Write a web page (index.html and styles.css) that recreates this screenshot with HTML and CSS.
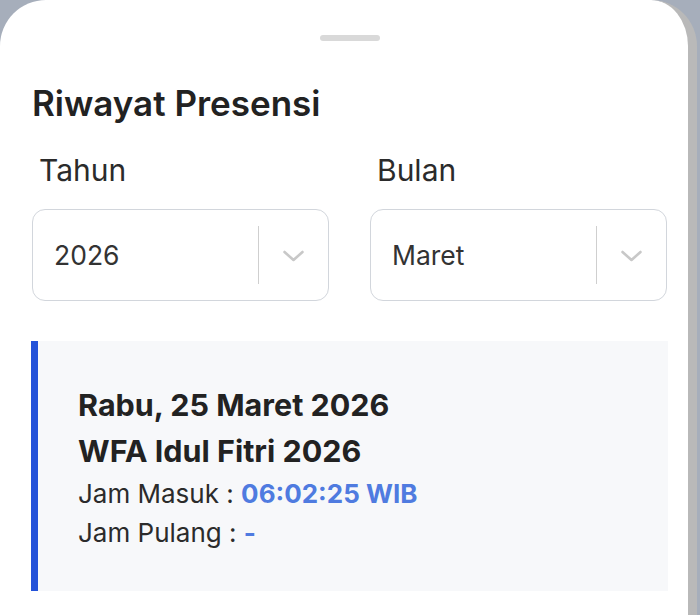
FILE: index.html
```html
<!DOCTYPE html>
<html lang="id">
<head>
<meta charset="utf-8">
<title>Riwayat Presensi</title>
<link rel="stylesheet" href="styles.css">
</head>
<body>
<div class="sheet">
  <div class="handle"></div>
  <h1 class="title">Riwayat Presensi</h1>
  <div class="filters">
    <div class="field">
      <div class="label">Tahun</div>
      <div class="select">
        <span class="value">2026</span>
        <span class="sep"></span>
        <svg class="chev" width="23" height="14" viewBox="0 0 23 14"><path d="M2.5 3L11.5 11L20.5 3" fill="none" stroke="#c8c8c8" stroke-width="2.6" stroke-linecap="round" stroke-linejoin="round"/></svg>
      </div>
    </div>
    <div class="field">
      <div class="label">Bulan</div>
      <div class="select">
        <span class="value">Maret</span>
        <span class="sep"></span>
        <svg class="chev" width="23" height="14" viewBox="0 0 23 14"><path d="M2.5 3L11.5 11L20.5 3" fill="none" stroke="#c8c8c8" stroke-width="2.6" stroke-linecap="round" stroke-linejoin="round"/></svg>
      </div>
    </div>
  </div>
  <div class="card">
    <div class="date">Rabu, 25 Maret 2026</div>
    <div class="event">WFA Idul Fitri 2026</div>
    <div class="row">Jam Masuk : <span class="time">06:02:25 WIB</span></div>
    <div class="row">Jam Pulang : <span class="time">-</span></div>
  </div>
</div>
</body>
</html>
```
FILE: styles.css
```css
html, body {
  margin: 0;
  padding: 0;
}
body {
  background: #a6aebb;
  width: 700px;
  height: 615px;
  overflow: hidden;
  font-family: Inter, "Noto Sans", sans-serif;
}
.sheet {
  box-sizing: border-box;
  width: 697px;
  height: 615px;
  background: #fff;
  border-right: 9px solid #b9b9b9;
  border-radius: 46px 46px 0 0;
  padding: 35px 20px 0 32px;
}
.handle {
  width: 60px;
  height: 6px;
  border-radius: 3px;
  background: #d9d9d9;
  margin: 0 0 0 288px;
}
.title {
  margin: 42px 0 0 0;
  font-size: 35px;
  line-height: 40px;
  font-weight: 600;
  color: #222;
}
.filters {
  display: grid;
  grid-template-columns: 297px 297px;
  column-gap: 41px;
  margin-top: 27px;
}
.label {
  font-size: 30px;
  line-height: 40px;
  color: #2b2b2b;
  padding-left: 7px;
}
.select {
  margin-top: 19px;
  box-sizing: border-box;
  height: 92px;
  border: 1.5px solid #d2d6dc;
  border-radius: 13px;
  display: flex;
  align-items: center;
  padding-left: 21px;
}
.value {
  flex: 1;
  font-size: 26.5px;
  color: #333;
}
.sep {
  width: 1.5px;
  height: 58px;
  background: #cfcfcf;
}
.chev {
  margin: 2px 23px 0 23px;
}
.card {
  margin-top: 40px;
  width: 637px;
  height: 250px;
  box-sizing: border-box;
  margin-left: -1px;
  background: #f7f8fa;
  border-left: 7px solid #2352d9;
  padding: 41px 0 0 40px;
}
.date, .event {
  font-size: 30.5px;
  line-height: 46px;
  font-weight: 700;
  color: #222;
}
.row {
  font-size: 26px;
  line-height: 39px;
  color: #2b2b2b;
}
.time {
  color: #4f7be0;
  font-weight: 700;
}
```
